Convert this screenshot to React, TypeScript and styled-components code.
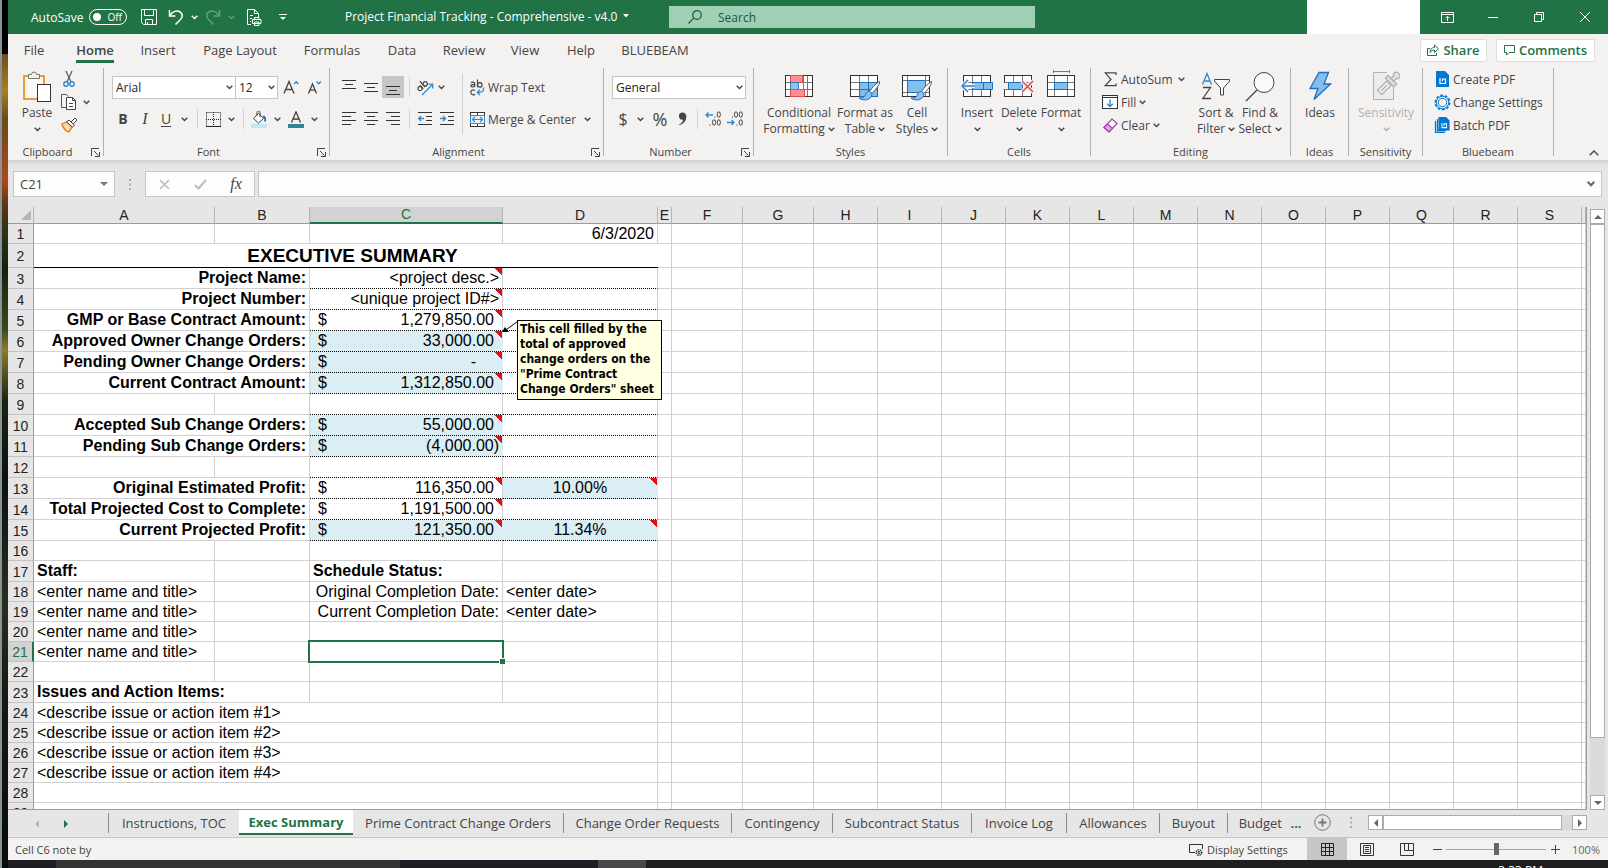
import React from "react";
import styled, { createGlobalStyle, css } from "styled-components";

const UI = `"Open Sans", "Noto Sans", sans-serif`;
const SHEET = `"Liberation Sans", Arial, sans-serif`;
const GREEN = "#217346";
const INK = "#444444";

const Global = createGlobalStyle`
  *, *::before, *::after { box-sizing: border-box; }
  body { margin: 0; background: #1d1d23; font-family: ${UI}; font-size: 12px; color: ${INK}; overflow: hidden; }
  button, input, select { font: inherit; color: inherit; }
  svg { display: block; flex: none; }
`;

/* ---------- frame ---------- */

const Desktop = styled.div`
  display: grid;
  grid-template: minmax(0, 1fr) 8px / 8px minmax(0, 1fr);
  height: 100vh;
`;

const Wallpaper = styled.div`
  grid-row: 1 / 3;
  border-left: 2px solid #8a9296;
  background: linear-gradient(
    #000 0 54px, #6e4d1c 54px, #a8801f 90px, #6b4a1a 120px, #8a4a1c 150px,
    #b0491c 180px, #5c3418 205px, #2c3418 230px, #16200f 270px, #3d4a1c 330px,
    #8a7c2c 350px, #1c2412 400px, #0c120c 480px, #26301f 600px, #141a12 700px, #080c08 100%
  );
`;

const Window = styled.div`
  display: flex;
  flex-direction: column;
  min-width: 0;
  background: #e6e6e6;
`;

const Taskbar = styled.div`
  display: flex;
  justify-content: space-between;
  height: 8px;
  overflow: hidden;
  background: linear-gradient(90deg, #1d1d23 48px, #333 48px 392px, #1d1d23 392px 590px, #48484b 590px 638px, #1f1f22 638px);
`;

const Clock = styled.time`
  margin: 3px 65px 0 auto;
  line-height: 16px;
  color: #fff;
`;

/* ---------- title bar ---------- */

const TitleBar = styled.header`
  display: flex;
  flex: none;
  height: 34px;
  background: ${GREEN};
  color: #fff;
`;

const QuickAccess = styled.div`
  display: flex;
  align-items: center;
  width: 337px;
  padding-left: 23px;
`;

const AutoSave = styled.label`
  display: flex;
  align-items: center;
  gap: 6px;
  width: 106px;
`;

const Switch = styled.span`
  display: flex;
  align-items: center;
  gap: 6px;
  width: 38px;
  height: 16px;
  padding-left: 3px;
  border: 1px solid #fff;
  border-radius: 8px;
  font-size: 10px;
  line-height: 14px;

  input {
    appearance: none;
    width: 8px;
    height: 8px;
    margin: 0;
    border-radius: 4px;
    background: #fff;
  }
`;

const BarButton = styled.button<{ $w: number; $dim?: boolean }>`
  display: flex;
  align-items: center;
  justify-content: center;
  flex: none;
  width: ${(p) => p.$w}px;
  height: 34px;
  padding: 0;
  border: 0;
  background: none;
  opacity: ${(p) => (p.$dim ? 0.3 : 1)};
`;

const DocTitle = styled.button`
  display: flex;
  align-items: center;
  gap: 6px;
  width: 324px;
  padding: 0 0 2px;
  border: 0;
  background: none;
  white-space: nowrap;
`;

const SearchBox = styled.label`
  display: flex;
  align-items: center;
  flex: 0 1 366px;
  gap: 16px;
  height: 22px;
  margin-top: 6px;
  padding-left: 19px;
  background: #9fcfb5;
  color: #185c37;

  input {
    flex: 1;
    min-width: 0;
    padding: 0;
    border: 0;
    background: none;
    outline: 0;
  }
  input::placeholder { color: #185c37; opacity: 1; }
`;

const Account = styled.div`
  width: 113px;
  margin: 0 4px 0 auto;
  background: #fff;
`;

/* ---------- ribbon tabs ---------- */

const TabRow = styled.nav`
  display: flex;
  align-items: center;
  flex: none;
  height: 32px;
  padding: 0 13px 0 3px;
  background: #f3f2f1;
`;

const RibbonTab = styled.a<{ $w: number; $on?: boolean }>`
  display: flex;
  justify-content: center;
  width: ${(p) => p.$w}px;
  padding-top: 3px;
  color: ${INK};
  font-size: 13px;
  line-height: 20px;
  text-decoration: none;
  white-space: nowrap;

  span { border-bottom: 3px solid transparent; }
  ${(p) => p.$on && css`
    font-weight: 600;
    span { border-color: ${GREEN}; }
  `}
`;

const ActionButton = styled.button<{ $w: number }>`
  display: flex;
  align-items: center;
  justify-content: center;
  gap: 4px;
  width: ${(p) => p.$w}px;
  height: 23px;
  margin-left: 9px;
  padding: 0;
  border: 1px solid #e1dfdd;
  border-radius: 2px;
  background: #fff;
  color: ${GREEN};
  font-size: 13px;
  font-weight: 600;
  white-space: nowrap;
`;

const Push = styled.div`
  flex: 1;
`;

/* ---------- ribbon ---------- */

const RibbonBar = styled.section`
  display: flex;
  flex: none;
  height: 94px;
  padding-top: 2px;
  background: #f3f2f1;
`;

const Divider = styled.i`
  flex: none;
  width: 1px;
  height: 88px;
  background: #b1b1b1;
`;

const GroupBox = styled.div<{ $w: number }>`
  display: flex;
  flex-direction: column;
  flex: none;
  width: ${(p) => p.$w}px;
`;

const GroupBody = styled.div<{ $pad?: number }>`
  display: flex;
  height: 76px;
  padding: 0 ${(p) => p.$pad ?? 8}px;
`;

const GroupFoot = styled.div`
  display: flex;
  align-items: center;
  height: 16px;
  font-size: 11px;
  line-height: 14px;

  span { flex: 1; text-align: center; white-space: nowrap; }
  svg { margin: 0 3px 0 4px; }
`;

const BigButton = styled.button<{ $w: number; $dim?: boolean }>`
  display: flex;
  flex-direction: column;
  align-items: center;
  flex: none;
  width: ${(p) => p.$w}px;
  padding: 0;
  border: 0;
  background: none;
  line-height: 16px;
  white-space: nowrap;
  ${(p) => p.$dim && css`color: #b3b0ad;`}

  > svg:first-child { margin: 2px 0 3px; }
`;

const Line = styled.span`
  display: flex;
  align-items: center;
  gap: 3px;
  height: 16px;
`;

const Rows = styled.div`
  display: flex;
  flex-direction: column;
  flex: none;
`;

const ToolRows = styled(Rows)`
  gap: 10px;
  padding-top: 8px;
`;

const ToolRow = styled.div`
  display: flex;
  align-items: center;
  height: 22px;
`;

const SmallRow = styled.div`
  display: flex;
  align-items: flex-start;
  height: 23px;
`;

const Tool = styled.button<{ $w: number; $on?: boolean }>`
  display: flex;
  align-items: center;
  justify-content: center;
  flex: none;
  width: ${(p) => p.$w}px;
  height: 22px;
  padding: 0;
  border: 0;
  background: ${(p) => (p.$on ? "#c8c6c4" : "none")};
`;

const TextTool = styled.button`
  display: flex;
  align-items: center;
  height: 22px;
  padding: 0;
  border: 0;
  background: none;
  white-space: nowrap;
`;

const IconSlot = styled.span<{ $w?: number }>`
  display: flex;
  align-items: center;
  justify-content: center;
  width: ${(p) => p.$w ?? 22}px;
`;

const Glyph = styled.span<{ $size: number; $kind?: "bold" | "italic" | "under" }>`
  font-size: ${(p) => p.$size}px;
  line-height: 20px;
  ${(p) => p.$kind === "bold" && css`font-weight: 700;`}
  ${(p) => p.$kind === "italic" && css`font-family: "Liberation Serif", serif; font-style: italic;`}
  ${(p) => p.$kind === "under" && css`text-decoration: underline; text-underline-offset: 2px;`}
`;

const Sep = styled.i<{ $w: number; $tall?: boolean }>`
  flex: none;
  width: ${(p) => p.$w}px;
  height: ${(p) => (p.$tall ? 60 : 20)}px;
  background: linear-gradient(#d2d0ce, #d2d0ce) center / 1px 100% no-repeat;
`;

const TallSep = styled(Sep)`
  margin-top: 6px;
`;

const Picker = styled.span<{ $w: number }>`
  position: relative;
  display: flex;
  flex: none;
  width: ${(p) => p.$w}px;
  height: 23px;

  & + & { margin-left: -1px; }
  select {
    appearance: none;
    width: 100%;
    padding: 0 3px;
    border: 1px solid #c8c6c4;
    border-radius: 0;
    background: #fff;
    color: #252423;
  }
  svg { position: absolute; right: 3px; top: 9px; pointer-events: none; }
`;

const Collapse = styled.button`
  align-self: flex-end;
  margin: 0 9px 0 auto;
  padding: 0 0 4px;
  border: 0;
  background: none;
`;

/* ---------- formula bar ---------- */

const FormulaBar = styled.div`
  display: flex;
  flex: none;
  height: 47px;
  padding: 11px 6px 10px 5px;
  background: linear-gradient(#cfcfcf, #e6e6e6 5px);
`;

const Field = styled.div<{ $w?: number }>`
  display: flex;
  align-items: center;
  flex: ${(p) => (p.$w ? `0 0 ${p.$w}px` : "1 1 0")};
  min-width: 0;
  height: 26px;
  padding: 0 6px;
  border: 1px solid #c6c6c6;
  background: #fdfdfd;

  input {
    flex: 1;
    width: 100%;
    min-width: 0;
    padding: 0;
    border: 0;
    outline: 0;
    background: none;
    font-size: 13px;
  }
`;

const Grip = styled.span<{ $w: number }>`
  display: flex;
  align-items: center;
  justify-content: center;
  flex: none;
  width: ${(p) => p.$w}px;
`;

/* ---------- worksheet ---------- */

const Work = styled.main`
  display: flex;
  flex: 1 1 0;
  min-height: 0;
`;

const SheetPane = styled.div`
  flex: 1;
  min-width: 0;
  overflow: hidden;
  border-right: 1px solid #9b9b9b;
  border-bottom: 1px solid #9b9b9b;
  background: #fff;
`;

const Table = styled.table`
  width: 100%;
  table-layout: fixed;
  border-spacing: 0;
  border-collapse: separate;
  color: #000;
  font-family: ${SHEET};
  font-size: 16px;
  line-height: 18px;
`;

const ColHead = styled.th<{ $on?: boolean }>`
  height: 17px;
  padding: 0;
  border-right: 1px solid #b4b4b4;
  border-bottom: ${(p) => (p.$on ? `2px solid ${GREEN}` : "1px solid #9b9b9b")};
  background: ${(p) => (p.$on ? "#d2d2d2" : "#e6e6e6")};
  color: ${(p) => (p.$on ? GREEN : "#222")};
  font-size: 14px;
  font-weight: 400;
  line-height: 15px;
`;

const Corner = styled(ColHead)`
  svg { margin-left: 13px; }
`;

const RowHead = styled.th<{ $on?: boolean }>`
  padding: 1px 0 0;
  border-right: ${(p) => (p.$on ? `2px solid ${GREEN}` : "1px solid #9b9b9b")};
  border-bottom: 1px solid #c3c3c3;
  background: ${(p) => (p.$on ? "#d2d2d2" : "#e6e6e6")};
  color: ${(p) => (p.$on ? GREEN : "#222")};
  font-size: 14px;
  font-weight: 400;
  line-height: 16px;
`;

const Row = styled.tr<{ $h: number }>`
  height: ${(p) => p.$h}px;
`;

type Look = {
  $bold?: boolean;
  $align?: "left" | "right" | "center";
  $dotted?: boolean;
  $blue?: boolean;
  $flag?: boolean;
};

const Cell = styled.td<Look>`
  position: relative;
  padding: 0 3px;
  border-right: 1px solid ${(p) => (p.$blue ? "#daeef3" : "#d0d0d0")};
  border-bottom: 1px ${(p) => (p.$dotted ? "dotted #000" : "solid #d0d0d0")};
  background-color: ${(p) => (p.$blue ? "#daeef3" : "#fff")};
  font-weight: ${(p) => (p.$bold ? 700 : 400)};
  text-align: ${(p) => p.$align ?? "left"};
  white-space: nowrap;
  ${(p) => p.$flag && css`
    background-image: linear-gradient(to bottom left, #e01010 52%, transparent 52%);
    background-position: right top;
    background-size: 7px 7px;
    background-repeat: no-repeat;
  `}
`;

const TitleCell = styled.td`
  padding: 0;
  border-right: 1px solid #d0d0d0;
  background:
    linear-gradient(#000, #000) left bottom / calc(100% - 13px) 1px no-repeat,
    linear-gradient(#d0d0d0, #d0d0d0) left bottom / 100% 1px no-repeat;
  font-size: 19px;
  font-weight: 700;
  line-height: 20px;
  text-align: center;
`;

const Money = styled.span<{ $end: number }>`
  display: flex;
  justify-content: space-between;
  padding: 0 ${(p) => p.$end}px 0 5px;
`;

const Selection = styled.span`
  position: absolute;
  z-index: 1;
  inset: -2px;
  border: 2px solid ${GREEN};

  &::after {
    content: "";
    position: absolute;
    right: -3px;
    bottom: -3px;
    width: 6px;
    height: 6px;
    border: solid #fff;
    border-width: 1px 0 0 1px;
    background: ${GREEN};
  }
`;

const NoteBox = styled.aside`
  position: absolute;
  z-index: 2;
  top: -11px;
  left: calc(100% + 15px);
  width: 145px;
  padding: 1px 2px 2px;
  border: 1px solid #000;
  background: #ffffe1;
  font: 700 12px/15px "DejaVu Sans Condensed", "DejaVu Sans", sans-serif;
  text-align: left;
`;

const NoteArrow = styled.svg`
  position: absolute;
  z-index: 2;
  top: -11px;
  left: 100%;
`;

/* ---------- scroll bars ---------- */

const VScroll = styled.div`
  display: flex;
  flex-direction: column;
  width: 15px;
  margin: 2px 3px 0 3px;
  background: #dadada;
`;

const ScrollButton = styled.button`
  display: flex;
  align-items: center;
  justify-content: center;
  flex: none;
  width: 15px;
  height: 15px;
  padding: 0;
  border: 1px solid #ababab;
  background: #fff;
`;

const VThumb = styled.div`
  flex: 9 1 0;
  border: 1px solid #ababab;
  background: #fff;
`;

const Track = styled.div`
  flex: 1 1 0;
`;

const HScroll = styled.div`
  display: flex;
  flex: none;
  width: 219px;
  height: 15px;
  margin: 0 21px 0 auto;
  background: #dadada;
`;

const HThumb = styled.div`
  flex: 17 1 0;
  border: 1px solid #ababab;
  background: #fff;
`;

/* ---------- sheet tabs ---------- */

const SheetBar = styled.nav`
  display: flex;
  align-items: center;
  flex: none;
  height: 28px;
  padding-bottom: 2px;
  border-bottom: 1px solid #c6c6c6;
`;

const SheetNav = styled.div`
  display: flex;
  flex: none;
  width: 101px;
  height: 20px;
  padding-left: 14px;
  border-right: 1px solid #8a8a8a;
`;

const SheetTab = styled.a<{ $w: number; $on?: boolean; $bare?: boolean; $last?: boolean }>`
  flex: none;
  width: ${(p) => p.$w}px;
  color: ${INK};
  font-size: 13px;
  line-height: 20px;
  text-align: ${(p) => (p.$last ? "right" : "center")};
  text-decoration: none;
  white-space: nowrap;
  border-right: ${(p) => (p.$bare || p.$last ? "0" : "1px solid #8a8a8a")};
  ${(p) => p.$on && css`
    align-self: flex-start;
    height: 25px;
    border: solid ${GREEN};
    border-width: 0 0 2px;
    background: #fff;
    color: ${GREEN};
    font-weight: 700;
    line-height: 24px;
  `}
`;

const More = styled.button`
  flex: none;
  width: 28px;
  padding: 0;
  border: 0;
  background: none;
  color: ${GREEN};
  font-size: 13px;
  font-weight: 700;
  line-height: 20px;
`;

/* ---------- status bar ---------- */

const StatusBar = styled.footer`
  display: flex;
  align-items: center;
  flex: none;
  height: 22px;
  padding: 0 8px 0 7px;
  background: #f3f2f1;
  font-size: 11px;
`;

const DisplayButton = styled.button`
  display: flex;
  align-items: center;
  gap: 4px;
  width: 118px;
  margin-left: auto;
  padding: 0;
  border: 0;
  background: none;
  white-space: nowrap;
`;

const Zoom = styled.div`
  display: flex;
  align-items: center;
  margin-left: 3px;

  input {
    appearance: none;
    width: 100px;
    height: 12px;
    margin: 0 2px;
    background: linear-gradient(#a6a6a6, #a6a6a6) center / 100% 1px no-repeat;
  }
  input::-webkit-slider-thumb {
    appearance: none;
    width: 5px;
    height: 12px;
    background: #666;
  }
  output { width: 38px; text-align: right; color: #666; white-space: nowrap; }
`;

/* ---------- icons ---------- */

type IconProps = { w: number; h: number; children: React.ReactNode; stroke?: string; sw?: number };
const Icon = ({ w, h, children, stroke = INK, sw = 1 }: IconProps) => (
  <svg width={w} height={h} viewBox={`0 0 ${w} ${h}`} fill="none" stroke={stroke} strokeWidth={sw} aria-hidden="true">
    {children}
  </svg>
);

const Chevron = ({ c = INK }: { c?: string }) => (
  <Icon w={7} h={5} stroke={c} sw={1.4}><path d="M.7.8 3.5 3.6 6.3.8" /></Icon>
);

const Triangle = ({ d, c = "#666" }: { d: "up" | "down" | "left" | "right"; c?: string }) => {
  const paths = { up: "M0 6 4 2l4 4z", down: "M0 2h8L4 6z", left: "M6 0v8L2 4z", right: "M2 0v8l4-4z" };
  return <Icon w={8} h={8} stroke="none"><path d={paths[d]} fill={c} /></Icon>;
};

const Launcher = () => (
  <Icon w={9} h={9}><path d="M.5 8V.5H8M3 3l4.500 4.500M8.500 4v4.500H4" /></Icon>
);

const linesPath = (rows: [number, number][], top = 0, step = 4) =>
  rows.map(([a, b], i) => `M${a} ${top + i * step + 0.5}H${b}`).join("");

const Lines = ({ rows, top = 0, step = 4 }: { rows: [number, number][]; top?: number; step?: number }) => (
  <Icon w={14} h={15} stroke="#333"><path d={linesPath(rows, top, step)} /></Icon>
);

const PasteIcon = () => (
  <Icon w={28} h={32}>
    <rect x="1" y="6" width="20" height="23" fill="#fff3dc" stroke="#e8871a" strokeWidth="1.6" />
    <rect x="4" y="8" width="14" height="19" fill="#fafafa" stroke="none" />
    <path d="M5.500 8.500v-4h3a2.500 2.500 0 0 1 5 0h3v4z" fill="#f3f2f1" stroke="#767676" />
    <rect x="14.500" y="14.500" width="13" height="17" fill="#fff" stroke="#333" />
  </Icon>
);

const ScissorsIcon = () => (
  <Icon w={14} h={18}>
    <path d="M4 1l5 11M10 1 5 12" stroke="#555" strokeWidth="1.200" />
    <circle cx="4" cy="14" r="2.200" stroke="#2e8ad0" strokeWidth="1.400" />
    <circle cx="10" cy="14" r="2.200" stroke="#2e8ad0" strokeWidth="1.400" />
  </Icon>
);

const CopyIcon = () => (
  <Icon w={18} h={17}>
    <path d="M6 13.500H1.500V.5h5l2 2" stroke="#555" />
    <path d="M6.500 3.500h6l3 3v9h-9z" fill="#fff" />
    <path d="M12.500 3.500v3h3M9 9.500h4M9 12.500h4" />
  </Icon>
);

const BrushIcon = () => (
  <Icon w={17} h={16}>
    <path d="M1 7l5-2 5 5-3 5c-3-1-6-4-7-8z" fill="#fcd9ae" stroke="#e07b10" strokeWidth="1.300" />
    <path d="M5.500 5 8 3l5.500 5-2 2z" fill="#fff" />
    <path d="M10 5l4-4 2 2-4 4z" fill="#fff" />
  </Icon>
);

const BordersIcon = () => (
  <Icon w={15} h={15} stroke="#222">
    <path d="M.5.5h14v14M.5.5v14M7.500 0v15M0 7.500h15" strokeDasharray="1 1" />
    <path d="M0 14.500h15" />
  </Icon>
);

const FillColorIcon = () => (
  <Icon w={16} h={17}>
    <path d="M2.500 7.500 7.500 2l5 5.500-5 4.500z" fill="#fff" />
    <path d="M6 5V1.500a1.500 1.500 0 0 1 3 0V6" />
    <path d="M12 5.500c2 0 2.500 2 2 5" stroke="#1f6fbf" strokeWidth="1.800" />
    <path d="M0 15h16" stroke="#bfe6f5" strokeWidth="4" />
  </Icon>
);

const FontColorIcon = () => (
  <Icon w={16} h={17}>
    <path d="M3.500 11.500 8 .8l4.500 10.700M5 8h6" strokeWidth="1.300" />
    <path d="M0 15h16" stroke="#31859c" strokeWidth="4" />
  </Icon>
);

const GrowIcon = ({ down }: { down?: boolean }) => (
  <Icon w={16} h={15}>
    {down ? (
      <><path d="M1.500 13.500 5.500 4l4 9.500M3 10.200h5" strokeWidth="1.300" /><path d="M9.500 1.500l2.200 2.200 2.200-2.200" stroke="#2e8ad0" strokeWidth="1.400" /></>
    ) : (
      <><path d="M1 13.500 6 1.500l5 12M2.800 9.500h6.400" strokeWidth="1.300" /><path d="M11 4l2.200-2.200L15.400 4" stroke="#2e8ad0" strokeWidth="1.400" /></>
    )}
  </Icon>
);

const OrientIcon = () => (
  <Icon w={17} h={17}>
    <g transform="rotate(-42 7 8)" strokeWidth="1.200">
      <circle cx="3" cy="6.500" r="2.100" /><path d="M5.200 4v4.800M7.800 1v7.800" /><circle cx="10" cy="6.500" r="2.100" />
    </g>
    <path d="M5 16 15.500 5.500M11.500 5.200h4.200v4.200" stroke="#2e8ad0" strokeWidth="1.300" />
  </Icon>
);

const IndentIcon = ({ right }: { right?: boolean }) => (
  <Icon w={14} h={14}>
    <path d="M0 .5h14M8 4.500h6M8 8.500h6M0 12.500h14" stroke="#333" />
    <path d={right ? "M0 6.500h5M3 4l2.500 2.500L3 9" : "M6 6.500H1M3 4 .7 6.500 3 9"} stroke="#2e8ad0" strokeWidth="1.400" />
  </Icon>
);

const WrapIcon = () => (
  <Icon w={15} h={17}>
    <g strokeWidth="1.200">
      <path d="M1 3.700c1-.9 3.700-.9 3.700 1V8M4.700 5.800C1.500 5.500.8 6 .8 7s2.700 1.600 3.900 0M7.500.5v7.700" />
      <circle cx="9.800" cy="5.900" r="2.200" />
      <path d="M5 11.500c-2.500-1.500-4.200 0-4.200 1.900s2 3.200 4.200 2" />
    </g>
    <path d="M13.500 8.500c.8 4-1.500 5-6 5M10 10.800 7.200 13.500 10 16" stroke="#2e8ad0" strokeWidth="1.400" />
  </Icon>
);

const MergeIcon = () => (
  <Icon w={15} h={15} stroke="#333">
    <rect x=".5" y=".5" width="14" height="14" fill="#fff" />
    <path d="M7.500 0v4M7.500 11v4" />
    <rect x=".5" y="3.500" width="14" height="8" fill="#eaf4fc" stroke="#2e8ad0" />
    <path d="M2.500 7.500h10M5 5 2.500 7.500 5 10M10 5l2.500 2.500L10 10" stroke="#2e8ad0" strokeWidth="1.200" />
  </Icon>
);

const CommaIcon = () => (
  <Icon w={9} h={14} stroke="none">
    <path d="M4.300.5A3.700 3.700 0 0 1 8.300 4.800C8.300 9 5.500 12 1.500 13.200L1.200 12.400C3.500 11.400 4.800 9.800 5 7.800A3.600 3.600 0 1 1 4.300.5z" fill={INK} />
  </Icon>
);

const Zero = ({ x, y }: { x: number; y: number }) => <ellipse cx={x} cy={y} rx="1.600" ry="2.700" />;

const DecimalIcon = ({ less }: { less?: boolean }) => (
  <Icon w={16} h={16}>
    {less ? (
      <>
        <Zero x={9} y={3.5} /><Zero x={13.8} y={3.5} /><Zero x={13.8} y={11.5} />
        <path d="M5.500 5.500v1.200M10 13.500v1.200" />
        <path d="M0 11.500h7M4.500 9 7 11.500 4.500 14" stroke="#2e8ad0" strokeWidth="1.300" />
      </>
    ) : (
      <>
        <Zero x={13.8} y={3.5} /><Zero x={9} y={11.5} /><Zero x={13.8} y={11.5} />
        <path d="M10 5.500v1.200M5 13.500v1.200" />
        <path d="M8 4H1M3.500 1.500 1 4l2.500 2.500" stroke="#2e8ad0" strokeWidth="1.300" />
      </>
    )}
  </Icon>
);

const Grid = ({ x = 0, y = 5 }: { x?: number; y?: number }) => (
  <g transform={`translate(${x} ${y})`}>
    <rect x=".5" y=".5" width="27" height="21" fill="#fff" stroke="#333" />
    <path d="M0 7.500h28M0 14.500h28M9.500 0v22M18.500 0v22" stroke="#777" />
    <rect x=".5" y=".5" width="27" height="21" stroke="#333" />
  </g>
);

const Brush = () => (
  <>
    <path d="M30 11.500c-3 1-8 6-10.500 10l2.500 2C25 20.500 29.500 15 30 11.500z" fill="#fff" stroke="#555" />
    <path d="M19.500 21.500c-3 0-4 2-4.500 4s-3 2.500-6 2.500c3 3 13 3 13-4.500z" fill="#8cc4f0" stroke="#1f6fbf" />
  </>
);

const CondIcon = () => (
  <Icon w={28} h={32}>
    <rect x=".5" y="5.500" width="27" height="21" fill="#fff" stroke="#333" />
    <path d="M0 12.500h28M0 19.500h28M5.500 5v22M18.500 5v22M22.500 5v22" stroke="#777" />
    <rect x=".5" y="5.500" width="27" height="21" stroke="#333" />
    <rect x="5.500" y="5.500" width="12" height="7" fill="#ff8f92" stroke="#e8484c" />
    <rect x="5.500" y="12.500" width="8" height="7" fill="#8cc4f0" stroke="#3d7ab5" />
    <rect x="5.500" y="19.500" width="14" height="7" fill="#ff8f92" stroke="#e8484c" />
  </Icon>
);

const TableIcon = () => (
  <Icon w={30} h={32}>
    <Grid />
    <rect x="9.500" y="12.500" width="18" height="14" fill="#83beec" stroke="#1f6fbf" />
    <path d="M10 19.500h18M18.500 13v14" stroke="#1f6fbf" />
    <Brush />
  </Icon>
);

const CellStyleIcon = () => (
  <Icon w={30} h={32}>
    <rect x=".5" y="5.500" width="27" height="21" fill="#fff" stroke="#333" />
    <path d="M5.500 5v22M0 10.500h28M0 22.500h28M23.500 5v22" stroke="#777" />
    <rect x=".5" y="5.500" width="27" height="21" stroke="#333" />
    <rect x="5.500" y="10.500" width="18" height="12" fill="#83beec" stroke="#1f6fbf" />
    <Brush />
  </Icon>
);

const InsertIcon = () => (
  <Icon w={32} h={32}>
    <Grid x={2} />
    <path d="M11.500 12.500h20v7h-20z" fill="#83beec" stroke="#1f6fbf" />
    <path d="M22.500 13v6" stroke="#1f6fbf" />
    <path d="M14 16H1M7 10 1 16l6 6" stroke="#f3f2f1" strokeWidth="4" />
    <path d="M14 16H1M7 10 1 16l6 6" stroke="#2e8ad0" strokeWidth="1.500" />
  </Icon>
);

const DeleteIcon = () => (
  <Icon w={30} h={32}>
    <Grid />
    <path d="M0 13h5v6H0z" fill="#f3f2f1" stroke="none" />
    <path d="M4.500 12.500h14v7h-14z" fill="#83beec" stroke="#1f6fbf" />
    <path d="M18 11l11 11M29 11 18 22" stroke="#f3f2f1" strokeWidth="4" />
    <path d="M18 11l11 11M29 11 18 22" stroke="#e8484c" strokeWidth="1.500" />
  </Icon>
);

const FormatIcon = () => (
  <Icon w={28} h={32}>
    <path d="M6.500 0v3M22.500 0v3M7 1.500h15" stroke="#2e8ad0" />
    <rect x=".5" y="5.500" width="27" height="21" fill="#fff" stroke="#333" />
    <path d="M0 12.500h28M0 19.500h28M7.500 5v22M20.500 5v22" stroke="#777" />
    <rect x=".5" y="5.500" width="27" height="21" stroke="#333" />
    <rect x="7.500" y="12.500" width="13" height="7" fill="#83beec" stroke="#1f6fbf" />
  </Icon>
);

const SumIcon = () => (
  <Icon w={13} h={15}><path d="M12 3V.8H1.200L7 7.500l-5.800 6.200H12v-2.200" strokeWidth="1.200" /></Icon>
);

const FillDownIcon = () => (
  <Icon w={16} h={14} stroke="#333">
    <rect x=".5" y=".5" width="15" height="13" fill="#fff" /><path d="M.5 2.500h15" />
    <path d="M8 4.500v7M5.200 8.800 8 11.500l2.800-2.700" stroke="#2e8ad0" strokeWidth="1.400" />
  </Icon>
);

const EraserIcon = () => (
  <Icon w={15} h={15} stroke="#a040a8" sw={1.2}>
    <path d="M1 9.500 9 1l5 4.500-8 8.500z" fill="#fff" /><path d="M1 9.500 4.500 6l5 4.300L6 14z" fill="#dfa3e3" />
  </Icon>
);

const SortIcon = () => (
  <Icon w={30} h={32}>
    <path d="M1.500 14.500 6 3.500l4.500 11M3 11h6" stroke="#2e8ad0" strokeWidth="1.300" />
    <path d="M2 17.500h7.500L1.800 28.500H10" strokeWidth="1.300" />
    <path d="M13.500 9.500h15v1.500l-6 7v7h-3v-7l-6-7z" fill="#fff" />
  </Icon>
);

const FindIcon = () => (
  <Icon w={30} h={32}>
    <circle cx="19" cy="12.500" r="10" fill="#fafafa" /><path d="M12 20 1 31" strokeWidth="1.300" />
  </Icon>
);

const BoltIcon = () => (
  <Icon w={24} h={32}>
    <path d="M11 2.500h9.500L16 14h6.500L6 29.500l4-11H2z" fill="#83beec" stroke="#1f6fbf" strokeWidth="1.300" />
  </Icon>
);

const SensitivityIcon = () => (
  <Icon w={28} h={32} stroke="#b3b0ad">
    <path d="M15 2.500H1.500v27h20V15" fill="#ececec" />
    <g transform="rotate(-45 14 14)" strokeWidth="1.300">
      <rect x="3.500" y="12.500" width="13" height="6" fill="#f3f2f1" /><path d="M6 15.500h8" />
      <path d="M17.500 9.500h4v12h-4z" fill="#e1dfdd" />
      <path d="M21.500 13.500h4c0-2 5-2.500 5 2s-5 4-5 2h-4z" fill="#e1dfdd" />
    </g>
  </Icon>
);

const PdfIcon = ({ batch }: { batch?: boolean }) => (
  <Icon w={16} h={16} stroke="none">
    {batch && <path d="M1.500 4v11.500H11M3.500 2v11.500H12" stroke="#0078d4" strokeWidth="1.300" />}
    <g transform={batch ? "translate(4.500 0) scale(.85)" : "translate(2 0)"}>
      <path d="M0 0h9l4 4v12H0z" fill="#0078d4" />
      <path d="M4 7v5.500h5.500V8H6.500v2.500" stroke="#fff" strokeWidth="1.200" />
    </g>
  </Icon>
);

const GearIcon = () => (
  <Icon w={17} h={17} stroke="#0078d4">
    <circle cx="8.500" cy="8.500" r="7.200" strokeWidth="1.600" strokeDasharray="2.800 1.700" />
    <circle cx="8.500" cy="8.500" r="6.200" /><circle cx="8.500" cy="8.500" r="4.200" />
  </Icon>
);

const SaveIcon = () => (
  <Icon w={16} h={16} stroke="#fff"><path d="M.5.5h15v15H2.500l-2-2zM3.500.5v6h9v-6M4.500 15.500v-5h7v5M6.500 13v2" /></Icon>
);
const UndoIcon = () => (
  <Icon w={16} h={16} stroke="#fff" sw={1.5}><path d="M1.500 1v6h6M1.500 7C4 3 8 1 11.500 2.500c3.500 2 3.500 6 .5 8.500l-4.500 4.500" /></Icon>
);
const RedoIcon = () => (
  <Icon w={16} h={16} stroke="#fff" sw={1.5}><path d="M14.500 1v6h-6M14.500 7C12 3 8 1 4.500 2.500 1 4.500 1 8.500 4 11l4.500 4.500" /></Icon>
);
const PrintIcon = () => (
  <Icon w={15} h={17} stroke="#fff">
    <path d="M4 15.500H.5V.5h7l4 4V8M7.500.5v4h4M3 6.500h3M3 9.500h2M3 12.500h1" />
    <path d="M5.500 10.500h8.500v4H5.500zM7.500 10V8.500h4.500V10M7.500 13v3.500h4.500V13z" fill={GREEN} />
  </Icon>
);
const SearchIcon = () => (
  <Icon w={14} h={14} stroke="#185c37" sw={1.2}><circle cx="9" cy="5" r="4.300" /><path d="M5.800 8.200.5 13.500" /></Icon>
);

/* ---------- data ---------- */

const columns: [string, number][] = [
  ["A", 181], ["B", 95], ["C", 193], ["D", 155], ["E", 14], ["F", 71], ["G", 71],
  ..."HIJKLMNOPQRS".split("").map((l): [string, number] => [l, 64]),
];

type CellData = {
  text?: string;
  span?: number;
  money?: string;
  bold?: boolean;
  align?: Look["$align"];
  dotted?: boolean;
  blue?: boolean;
  flag?: boolean;
  note?: string;
  selected?: boolean;
};
type RowData = { h: number; cells: CellData[]; title?: string };

const label = (text: string): CellData => ({ text, span: 2, bold: true, align: "right" });
const money = (amount: string, blue = true, note?: string): CellData => ({ money: amount, blue, dotted: true, flag: true, note });
const line: CellData = { dotted: true };
const blank: CellData = {};
const item = (text?: string): RowData => ({ h: 20, cells: [{ text, span: 4 }, blank] });

const rows: RowData[] = [
  { h: 20, cells: [blank, blank, blank, { text: "6/3/2020", align: "right" }, blank] },
  { h: 24, cells: [], title: "EXECUTIVE SUMMARY" },
  { h: 21, cells: [label("Project Name:"), { text: "<project desc.>", align: "right", dotted: true, flag: true }, line, blank] },
  { h: 21, cells: [label("Project Number:"), { text: "<unique project ID#>", align: "right", dotted: true, flag: true }, line, blank] },
  { h: 21, cells: [label("GMP or Base Contract Amount:"), money("1,279,850.00", false), line, blank] },
  {
    h: 21,
    cells: [
      label("Approved Owner Change Orders:"),
      money("33,000.00", true, 'This cell filled by the\ntotal of approved\nchange orders on the\n"Prime Contract\nChange Orders" sheet'),
      line,
      blank,
    ],
  },
  { h: 21, cells: [label("Pending Owner Change Orders:"), money("-"), line, blank] },
  { h: 21, cells: [label("Current Contract Amount:"), money("1,312,850.00"), line, blank] },
  { h: 21, cells: [blank, blank, line, line, blank] },
  { h: 21, cells: [label("Accepted Sub Change Orders:"), money("55,000.00"), line, blank] },
  { h: 21, cells: [label("Pending Sub Change Orders:"), money("(4,000.00)"), line, blank] },
  { h: 21, cells: [blank, blank, line, line, blank] },
  { h: 21, cells: [label("Original Estimated Profit:"), money("116,350.00", false), { text: "10.00%", align: "center", dotted: true, blue: true, flag: true }, blank] },
  { h: 21, cells: [label("Total Projected Cost to Complete:"), money("1,191,500.00", false), line, blank] },
  { h: 21, cells: [label("Current Projected Profit:"), money("121,350.00"), { text: "11.34%", align: "center", dotted: true, blue: true, flag: true }, blank] },
  { h: 20, cells: [blank, blank, blank, blank, blank] },
  { h: 21, cells: [{ text: "Staff:", bold: true }, blank, { text: "Schedule Status:", bold: true }, blank, blank] },
  { h: 20, cells: [{ text: "<enter name and title>" }, blank, { text: "Original Completion Date:", align: "right" }, { text: "<enter date>" }, blank] },
  { h: 20, cells: [{ text: "<enter name and title>" }, blank, { text: "Current Completion Date:", align: "right" }, { text: "<enter date>" }, blank] },
  { h: 20, cells: [{ text: "<enter name and title>" }, blank, blank, blank, blank] },
  { h: 20, cells: [{ text: "<enter name and title>" }, blank, { selected: true }, blank, blank] },
  { h: 20, cells: [blank, blank, blank, blank, blank] },
  { h: 21, cells: [{ text: "Issues and Action Items:", bold: true, span: 2 }, blank, blank, blank] },
  item("<describe issue or action item #1>"),
  item("<describe issue or action item #2>"),
  item("<describe issue or action item #3>"),
  item("<describe issue or action item #4>"),
  item(),
  item(),
];

const SELECTED_ROW = 21;

const ribbonTabs: [string, number][] = [
  ["File", 46], ["Home", 76], ["Insert", 50], ["Page Layout", 114], ["Formulas", 70],
  ["Data", 70], ["Review", 54], ["View", 68], ["Help", 44], ["BLUEBEAM", 104],
];

const sheetTabs: [string, number][] = [
  ["Instructions, TOC", 130], ["Exec Summary", 114], ["Prime Contract Change Orders", 211],
  ["Change Order Requests", 168], ["Contingency", 101], ["Subcontract Status", 139],
  ["Invoice Log", 95], ["Allowances", 93], ["Buyout", 68], ["Budget", 54],
];

/* ---------- parts ---------- */

const moneyEnd = (v: string) => (v === "-" ? 23 : v.startsWith("(") ? 0 : 5);

const SheetCell = ({ d }: { d: CellData }) => (
  <Cell colSpan={d.span} $bold={d.bold} $align={d.align} $dotted={d.dotted} $blue={d.blue} $flag={d.flag}>
    {d.money ? <Money $end={moneyEnd(d.money)}><span>$</span><span>{d.money}</span></Money> : d.text}
    {d.selected && <Selection />}
    {d.note && (
      <>
        <NoteArrow width="16" height="14" viewBox="0 0 16 14" aria-hidden="true">
          <path d="M16 1 4 10" stroke="#000" fill="none" />
          <path d="M0 12l3-5 4 5z" fill="#000" />
        </NoteArrow>
        <NoteBox>
          {d.note.split("\n").map((t) => <div key={t}>{t}</div>)}
        </NoteBox>
      </>
    )}
  </Cell>
);

const Worksheet = () => (
  <Table>
    <colgroup>
      <col style={{ width: 26 }} />
      {columns.map(([l, w]) => <col key={l} style={{ width: w }} />)}
      <col />
    </colgroup>
    <thead>
      <tr>
        <Corner><Icon w={10} h={10} stroke="none"><path d="M10 0v10H0z" fill="#b4b4b4" /></Icon></Corner>
        {columns.map(([l]) => <ColHead key={l} scope="col" $on={l === "C"}>{l}</ColHead>)}
        <ColHead />
      </tr>
    </thead>
    <tbody>
      {rows.map((r, i) => (
        <Row key={i} $h={r.h}>
          <RowHead scope="row" $on={i + 1 === SELECTED_ROW}>{i + 1}</RowHead>
          {r.title ? <TitleCell colSpan={5}>{r.title}</TitleCell> : r.cells.map((c, j) => <SheetCell key={j} d={c} />)}
          {columns.slice(5).map(([l]) => <Cell key={l} />)}
          <Cell />
        </Row>
      ))}
    </tbody>
  </Table>
);

const Group = ({ name, w, pad, launch, children }: {
  name: string; w: number; pad?: number; launch?: boolean; children: React.ReactNode;
}) => (
  <>
    <GroupBox $w={w}>
      <GroupBody $pad={pad}>{children}</GroupBody>
      <GroupFoot><span>{name}</span>{launch && <Launcher />}</GroupFoot>
    </GroupBox>
    <Divider />
  </>
);

const Big = ({ w, icon, lines, dim, drop = true }: {
  w: number; icon: React.ReactNode; lines: string[]; dim?: boolean; drop?: boolean;
}) => (
  <BigButton $w={w} $dim={dim}>
    {icon}
    <Line>{lines[0]}</Line>
    {drop && <Line>{lines[1]}<Chevron c={dim ? "#b3b0ad" : INK} /></Line>}
  </BigButton>
);

const Ribbon = () => (
  <RibbonBar>
    <Group name="Clipboard" w={95} launch>
      <Big w={42} icon={<PasteIcon />} lines={["Paste"]} />
      <Rows>
        <SmallRow><Tool $w={22} aria-label="Cut"><ScissorsIcon /></Tool></SmallRow>
        <SmallRow>
          <Tool $w={22} aria-label="Copy"><CopyIcon /></Tool>
          <Tool $w={12} aria-label="Copy options"><Chevron /></Tool>
        </SmallRow>
        <SmallRow><Tool $w={22} aria-label="Format Painter"><BrushIcon /></Tool></SmallRow>
      </Rows>
    </Group>

    <Group name="Font" w={225} launch>
      <ToolRows>
        <ToolRow>
          <Picker $w={124}><select aria-label="Font name"><option>Arial</option></select><Chevron /></Picker>
          <Picker $w={43}><select aria-label="Font size"><option>12</option></select><Chevron /></Picker>
          <Tool $w={26} aria-label="Increase font size"><GrowIcon /></Tool>
          <Tool $w={22} aria-label="Decrease font size"><GrowIcon down /></Tool>
        </ToolRow>
        <ToolRow>
          <Tool $w={22} aria-label="Bold"><Glyph $size={14} $kind="bold">B</Glyph></Tool>
          <Tool $w={22} aria-label="Italic"><Glyph $size={16} $kind="italic">I</Glyph></Tool>
          <Tool $w={20} aria-label="Underline"><Glyph $size={14} $kind="under">U</Glyph></Tool>
          <Tool $w={16} aria-label="Underline options"><Chevron /></Tool>
          <Sep $w={10} />
          <Tool $w={22} aria-label="Borders"><BordersIcon /></Tool>
          <Tool $w={14} aria-label="Border options"><Chevron /></Tool>
          <Sep $w={10} />
          <Tool $w={22} aria-label="Fill color"><FillColorIcon /></Tool>
          <Tool $w={14} aria-label="Fill color options"><Chevron /></Tool>
          <Tool $w={24} aria-label="Font color"><FontColorIcon /></Tool>
          <Tool $w={12} aria-label="Font color options"><Chevron /></Tool>
        </ToolRow>
      </ToolRows>
    </Group>

    <Group name="Alignment" w={273} launch>
      <ToolRows>
        <ToolRow>
          <Tool $w={22} aria-label="Top align"><Lines rows={[[0, 14], [3, 11], [0, 14]]} top={0} /></Tool>
          <Tool $w={22} aria-label="Middle align"><Lines rows={[[0, 14], [3, 11], [0, 14]]} top={3} /></Tool>
          <Tool $w={22} $on aria-label="Bottom align"><Lines rows={[[0, 14], [3, 11], [0, 14]]} top={6} /></Tool>
          <Sep $w={10} />
          <Tool $w={22} aria-label="Orientation"><OrientIcon /></Tool>
          <Tool $w={10} aria-label="Orientation options"><Chevron /></Tool>
        </ToolRow>
        <ToolRow>
          <Tool $w={22} aria-label="Align left"><Lines rows={[[0, 14], [0, 9], [0, 14], [0, 9]]} /></Tool>
          <Tool $w={22} aria-label="Center"><Lines rows={[[0, 14], [3, 11], [0, 14], [3, 11]]} /></Tool>
          <Tool $w={22} aria-label="Align right"><Lines rows={[[0, 14], [5, 14], [0, 14], [5, 14]]} /></Tool>
          <Sep $w={10} />
          <Tool $w={22} aria-label="Decrease indent"><IndentIcon /></Tool>
          <Tool $w={22} aria-label="Increase indent"><IndentIcon right /></Tool>
        </ToolRow>
      </ToolRows>
      <TallSep $w={8} $tall />
      <ToolRows>
        <ToolRow><TextTool><IconSlot><WrapIcon /></IconSlot>Wrap Text</TextTool></ToolRow>
        <ToolRow>
          <TextTool><IconSlot><MergeIcon /></IconSlot>Merge &amp; Center</TextTool>
          <Tool $w={22} aria-label="Merge options"><Chevron /></Tool>
        </ToolRow>
      </ToolRows>
    </Group>

    <Group name="Number" w={149} launch>
      <ToolRows>
        <ToolRow>
          <Picker $w={134}><select aria-label="Number format"><option>General</option></select><Chevron /></Picker>
        </ToolRow>
        <ToolRow>
          <Tool $w={22} aria-label="Accounting format"><Glyph $size={16}>$</Glyph></Tool>
          <Tool $w={12} aria-label="Accounting options"><Chevron /></Tool>
          <Tool $w={28} aria-label="Percent style"><Glyph $size={18}>%</Glyph></Tool>
          <Tool $w={16} aria-label="Comma style"><CommaIcon /></Tool>
          <Sep $w={14} />
          <Tool $w={18} aria-label="Increase decimal"><DecimalIcon /></Tool>
          <Tool $w={26} aria-label="Decrease decimal"><DecimalIcon less /></Tool>
        </ToolRow>
      </ToolRows>
    </Group>

    <Group name="Styles" w={193} pad={3}>
      <Big w={84} icon={<CondIcon />} lines={["Conditional", "Formatting"]} />
      <Big w={48} icon={<TableIcon />} lines={["Format as", "Table"]} />
      <Big w={56} icon={<CellStyleIcon />} lines={["Cell", "Styles"]} />
    </Group>

    <Group name="Cells" w={142}>
      <Big w={42} icon={<InsertIcon />} lines={["Insert"]} />
      <Big w={42} icon={<DeleteIcon />} lines={["Delete"]} />
      <Big w={42} icon={<FormatIcon />} lines={["Format"]} />
    </Group>

    <Group name="Editing" w={199}>
      <Rows>
        <SmallRow>
          <TextTool><IconSlot><SumIcon /></IconSlot>AutoSum</TextTool>
          <Tool $w={18} aria-label="AutoSum options"><Chevron /></Tool>
        </SmallRow>
        <SmallRow><TextTool><IconSlot><FillDownIcon /></IconSlot><Line>Fill<Chevron /></Line></TextTool></SmallRow>
        <SmallRow><TextTool><IconSlot><EraserIcon /></IconSlot><Line>Clear<Chevron /></Line></TextTool></SmallRow>
      </Rows>
      <Push />
      <Big w={44} icon={<SortIcon />} lines={["Sort &", "Filter"]} />
      <Big w={44} icon={<FindIcon />} lines={["Find &", "Select"]} />
    </Group>

    <Group name="Ideas" w={57} pad={2}>
      <Big w={54} icon={<BoltIcon />} lines={["Ideas"]} drop={false} />
    </Group>

    <Group name="Sensitivity" w={73} pad={2}>
      <Big w={70} icon={<SensitivityIcon />} lines={["Sensitivity"]} dim />
    </Group>

    <Group name="Bluebeam" w={130}>
      <Rows>
        <SmallRow><TextTool><IconSlot><PdfIcon /></IconSlot>Create PDF</TextTool></SmallRow>
        <SmallRow><TextTool><IconSlot><GearIcon /></IconSlot>Change Settings</TextTool></SmallRow>
        <SmallRow><TextTool><IconSlot><PdfIcon batch /></IconSlot>Batch PDF</TextTool></SmallRow>
      </Rows>
    </Group>
    <Collapse aria-label="Collapse ribbon"><Icon w={10} h={6} sw={1.3}><path d="M.7 5.300 5 1l4.300 4.300" /></Icon></Collapse>
  </RibbonBar>
);

const Title = () => (
  <TitleBar>
    <QuickAccess>
      <AutoSave>AutoSave<Switch><input type="checkbox" role="switch" />Off</Switch></AutoSave>
      <BarButton $w={24} aria-label="Save"><SaveIcon /></BarButton>
      <BarButton $w={30} aria-label="Undo"><UndoIcon /></BarButton>
      <BarButton $w={7} aria-label="Undo options"><Chevron c="#fff" /></BarButton>
      <BarButton $w={30} $dim aria-label="Redo"><RedoIcon /></BarButton>
      <BarButton $w={7} $dim aria-label="Redo options"><Chevron c="#fff" /></BarButton>
      <BarButton $w={38} aria-label="Print preview"><PrintIcon /></BarButton>
      <BarButton $w={20} aria-label="Customize toolbar">
        <Icon w={8} h={8} stroke="#fff"><path d="M0 1.500h8" /><path d="M1 4h6L4 7z" fill="#fff" stroke="none" /></Icon>
      </BarButton>
    </QuickAccess>
    <DocTitle>
      Project Financial Tracking - Comprehensive - v4.0
      <Icon w={6} h={4} stroke="none"><path d="M0 0h6L3 3.500z" fill="#fff" /></Icon>
    </DocTitle>
    <SearchBox><SearchIcon /><input type="search" placeholder="Search" aria-label="Search" /></SearchBox>
    <Account />
    <BarButton $w={46} aria-label="Ribbon display options">
      <Icon w={13} h={11} stroke="#fff"><path d="M.5.5h12v10H.5zM.5 2.500h12M6.500 9V4.500M4.500 6.300l2-2 2 2" /></Icon>
    </BarButton>
    <BarButton $w={46} aria-label="Minimize"><Icon w={10} h={10} stroke="#fff"><path d="M0 5.500h10" /></Icon></BarButton>
    <BarButton $w={46} aria-label="Restore">
      <Icon w={10} h={10} stroke="#fff"><path d="M.5 2.500h7v7h-7zM2.500 2.500v-2h7v7h-2" /></Icon>
    </BarButton>
    <BarButton $w={46} aria-label="Close"><Icon w={10} h={10} stroke="#fff"><path d="M0 0l10 10M10 0 0 10" /></Icon></BarButton>
  </TitleBar>
);

export default function App() {
  return (
    <Desktop>
      <Global />
      <Wallpaper />
      <Window>
        <Title />
        <TabRow>
          {ribbonTabs.map(([t, w]) => (
            <RibbonTab key={t} href="#" $w={w} $on={t === "Home"}><span>{t}</span></RibbonTab>
          ))}
          <Push />
          <ActionButton $w={67}>
            <Icon w={12} h={12} stroke={GREEN}><path d="M3 4.500H.5v7h9V9M3 8.500c0-3 1.500-5 4.500-5V1l4 3.800-4 3.700V6C5.500 6 4 7 3 8.500z" /></Icon>
            Share
          </ActionButton>
          <ActionButton $w={99}>
            <Icon w={11} h={11} stroke={GREEN}><path d="M.5.5h10v7H5L2.500 10V7.500h-2z" /></Icon>
            Comments
          </ActionButton>
        </TabRow>
        <Ribbon />
        <FormulaBar>
          <Field $w={102}><input defaultValue="C21" aria-label="Name box" /><Triangle d="down" c="#777" /></Field>
          <Grip $w={30}><Icon w={2} h={11} stroke="none"><path d="M0 0h2v2H0zM0 4.500h2v2H0zM0 9h2v2H0z" fill="#aaa" /></Icon></Grip>
          <Field $w={110}>
            <Tool $w={24} aria-label="Cancel"><Icon w={11} h={11} stroke="#bdbdbd" sw={1.6}><path d="M1 1l9 9M10 1 1 10" /></Icon></Tool>
            <Push />
            <Tool $w={24} aria-label="Enter"><Icon w={13} h={11} stroke="#bdbdbd" sw={2}><path d="M1 6l3.500 3.500L12 1" /></Icon></Tool>
            <Push />
            <Tool $w={24} aria-label="Insert function"><Glyph $size={16} $kind="italic">fx</Glyph></Tool>
          </Field>
          <Grip $w={3} />
          <Field>
            <input aria-label="Formula bar" />
            <Icon w={8} h={6} stroke="#666" sw={2}><path d="M.7.8 4 4.200 7.300.8" /></Icon>
          </Field>
        </FormulaBar>
        <Work>
          <SheetPane><Worksheet /></SheetPane>
          <VScroll>
            <ScrollButton aria-label="Scroll up"><Triangle d="up" /></ScrollButton>
            <VThumb />
            <Track />
            <ScrollButton aria-label="Scroll down"><Triangle d="down" /></ScrollButton>
          </VScroll>
        </Work>
        <SheetBar>
          <SheetNav>
            <Tool $w={30} aria-label="Previous sheets"><Triangle d="left" c="#bbb" /></Tool>
            <Tool $w={28} aria-label="Next sheets"><Triangle d="right" c={GREEN} /></Tool>
          </SheetNav>
          {sheetTabs.map(([t, w], i) => (
            <SheetTab key={t} href="#" $w={w} $on={i === 1} $bare={i === 0} $last={i === 9}>{t}</SheetTab>
          ))}
          <More aria-label="More sheets">...</More>
          <Tool $w={24} aria-label="New sheet">
            <Icon w={17} h={17} stroke="#777"><circle cx="8.500" cy="8.500" r="7.800" /><path d="M4.500 8.500h8M8.500 4.500v8" strokeWidth="1.800" /></Icon>
          </Tool>
          <Grip $w={34}><Icon w={2} h={11} stroke="none"><path d="M0 0h2v2H0zM0 4.500h2v2H0zM0 9h2v2H0z" fill="#aaa" /></Icon></Grip>
          <HScroll>
            <ScrollButton aria-label="Scroll left"><Triangle d="left" /></ScrollButton>
            <HThumb />
            <Track />
            <ScrollButton aria-label="Scroll right"><Triangle d="right" /></ScrollButton>
          </HScroll>
        </SheetBar>
        <StatusBar>
          Cell C6 note by
          <DisplayButton>
            <Icon w={14} h={13} stroke="#333">
              <path d="M6 9.500H.5v-8h13V6M2.500 12" /><circle cx="10" cy="9.500" r="2.800" strokeWidth="1.400" strokeDasharray="1.500 .8" /><circle cx="10" cy="9.500" r="1" />
            </Icon>
            Display Settings
          </DisplayButton>
          <Tool $w={40} $on aria-label="Normal view">
            <Icon w={13} h={13} stroke="#222"><path d="M.5.5h12v12H.5zM4.500 0v13M8.500 0v13M0 4.500h13M0 8.500h13" /></Icon>
          </Tool>
          <Tool $w={40} aria-label="Page layout view">
            <Icon w={14} h={13} stroke="#333"><path d="M.5.5h13v12H.5zM3.500 2.500h7v8h-7zM5 4.500h4M5 6.500h4M5 8.500h4" /></Icon>
          </Tool>
          <Tool $w={40} aria-label="Page break view">
            <Icon w={14} h={13} stroke="#333"><path d="M.5.5h13v12H.5zM4.500.5v7h4v-7M8.500 7.500h5" /></Icon>
          </Tool>
          <Zoom>
            <Tool $w={14} aria-label="Zoom out"><Icon w={9} h={9}><path d="M0 4.500h9" /></Icon></Tool>
            <input type="range" min="10" max="190" defaultValue="100" aria-label="Zoom" />
            <Tool $w={14} aria-label="Zoom in"><Icon w={9} h={9}><path d="M0 4.500h9M4.500 0v9" /></Icon></Tool>
            <output>100%</output>
          </Zoom>
        </StatusBar>
      </Window>
      <Taskbar><Clock>3:33 PM</Clock></Taskbar>
    </Desktop>
  );
}
